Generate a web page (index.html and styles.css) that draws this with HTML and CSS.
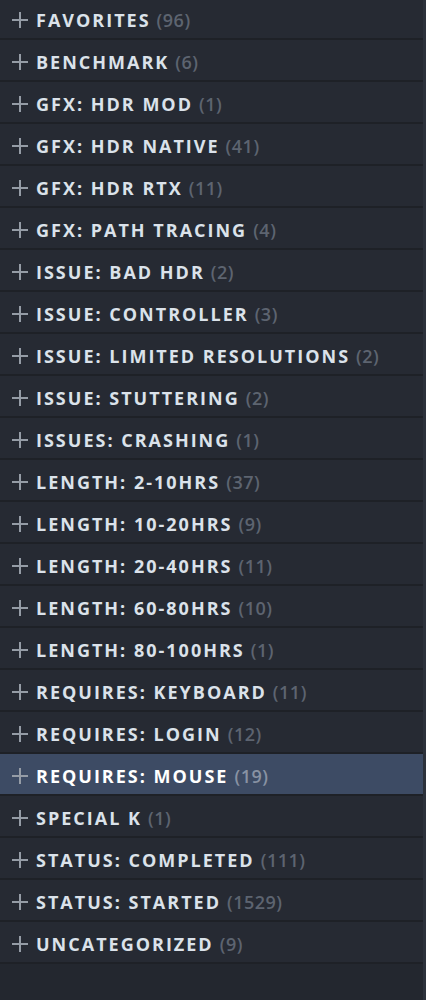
FILE: index.html
```html
<!DOCTYPE html>
<html lang="en">
<head>
    <meta charset="UTF-8">
    <meta name="viewport" content="width=device-width, initial-scale=1.0">
    <title>Collections</title>
    <link rel="stylesheet" href="styles.css">
</head>
<body>
    <div class="list">
        <div class="row"><span class="plus"></span><span class="name">Favorites</span><span class="count">(96)</span></div>
        <div class="row"><span class="plus"></span><span class="name">Benchmark</span><span class="count">(6)</span></div>
        <div class="row"><span class="plus"></span><span class="name">GFX: HDR Mod</span><span class="count">(1)</span></div>
        <div class="row"><span class="plus"></span><span class="name">GFX: HDR Native</span><span class="count">(41)</span></div>
        <div class="row"><span class="plus"></span><span class="name">GFX: HDR RTX</span><span class="count">(11)</span></div>
        <div class="row"><span class="plus"></span><span class="name">GFX: Path Tracing</span><span class="count">(4)</span></div>
        <div class="row"><span class="plus"></span><span class="name">Issue: Bad HDR</span><span class="count">(2)</span></div>
        <div class="row"><span class="plus"></span><span class="name">Issue: Controller</span><span class="count">(3)</span></div>
        <div class="row"><span class="plus"></span><span class="name">Issue: Limited Resolutions</span><span class="count">(2)</span></div>
        <div class="row"><span class="plus"></span><span class="name">Issue: Stuttering</span><span class="count">(2)</span></div>
        <div class="row"><span class="plus"></span><span class="name">Issues: Crashing</span><span class="count">(1)</span></div>
        <div class="row"><span class="plus"></span><span class="name">Length: 2-10hrs</span><span class="count">(37)</span></div>
        <div class="row"><span class="plus"></span><span class="name">Length: 10-20hrs</span><span class="count">(9)</span></div>
        <div class="row"><span class="plus"></span><span class="name">Length: 20-40hrs</span><span class="count">(11)</span></div>
        <div class="row"><span class="plus"></span><span class="name">Length: 60-80hrs</span><span class="count">(10)</span></div>
        <div class="row"><span class="plus"></span><span class="name">Length: 80-100hrs</span><span class="count">(1)</span></div>
        <div class="row"><span class="plus"></span><span class="name">Requires: Keyboard</span><span class="count">(11)</span></div>
        <div class="row"><span class="plus"></span><span class="name">Requires: Login</span><span class="count">(12)</span></div>
        <div class="row active"><span class="plus"></span><span class="name">Requires: Mouse</span><span class="count">(19)</span></div>
        <div class="row"><span class="plus"></span><span class="name">Special K</span><span class="count">(1)</span></div>
        <div class="row"><span class="plus"></span><span class="name">Status: Completed</span><span class="count">(111)</span></div>
        <div class="row"><span class="plus"></span><span class="name">Status: Started</span><span class="count">(1529)</span></div>
        <div class="row"><span class="plus"></span><span class="name">Uncategorized</span><span class="count">(9)</span></div>
    </div>
</body>
</html>
```

FILE: styles.css
```css
body {
    margin: 0;
    background-color: #23272f;
    font-family: "Open Sans", sans-serif;
    height: 1000px;
    overflow: hidden;
}
.list {
    width: 426px;
    margin-top: -2px;
    border-right: 3px solid #2c313b;
    box-sizing: border-box;
    min-height: 1002px;
}
.row {
    border-bottom: 2px solid #1e2127;
    background-color: #262a33;
    display: flex;
    align-items: center;
    padding: 3px 0 0 12px;
    box-sizing: border-box;
    height: 42px;
    white-space: nowrap;
}
.row.active {
    background-color: #3d4b64;
}
.plus {
    width: 16px;
    height: 16px;
    margin-right: 8px;
    position: relative;
}
.plus::before,
.plus::after {
    content: "";
    position: absolute;
    background-color: #959ca6;
}
.plus::before {
    left: 0;
    top: 7px;
    width: 16px;
    height: 2px;
}
.plus::after {
    left: 7px;
    top: 0;
    width: 2px;
    height: 16px;
}
.name {
    text-transform: uppercase;
    font-weight: 700;
    font-size: 18px;
    letter-spacing: 2px;
    color: #dbe2ea;
}
.count {
    margin-left: 6px;
    font-weight: 600;
    font-size: 18px;
    letter-spacing: 0.5px;
    color: #5d6470;
}
.row.active .name {
    color: #ffffff;
}
.row.active .count {
    color: #8892a3;
}
```
